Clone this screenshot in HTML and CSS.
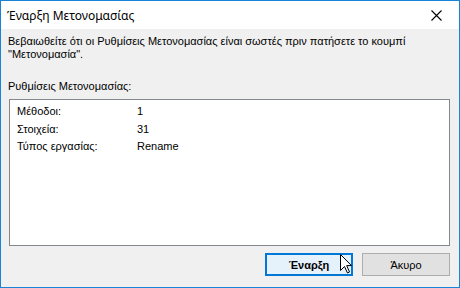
FILE: index.html
```html
<!DOCTYPE html>
<html lang="el">
<head>
<meta charset="utf-8">
<link rel="stylesheet" href="styles.css">
</head>
<body>
<div class="window">
  <div class="titlebar">
    <span class="title">Έναρξη Μετονομασίας</span>
    <span class="close">
      <svg width="11" height="11" viewBox="0 0 11 11"><path d="M0.5 0.5 L10.5 10.5 M10.5 0.5 L0.5 10.5" stroke="#000" stroke-width="1.1" fill="none"/></svg>
    </span>
  </div>
  <div class="content">
    <p class="intro">Βεβαιωθείτε ότι οι Ρυθμίσεις Μετονομασίας είναι σωστές πριν πατήσετε το κουμπί "Μετονομασία".</p>
    <p class="label">Ρυθμίσεις Μετονομασίας:</p>
    <div class="listbox">
      <div class="row"><span class="key">Μέθοδοι:</span><span class="val">1</span></div>
      <div class="row"><span class="key">Στοιχεία:</span><span class="val">31</span></div>
      <div class="row"><span class="key">Τύπος εργασίας:</span><span class="val">Rename</span></div>
    </div>
    <div class="buttons">
      <button class="btn btn-default">Έναρξη</button>
      <button class="btn">Άκυρο</button>
      <svg class="cursor" width="13" height="20" viewBox="0 0 13 20"><path d="M0.5 0.5 L0.5 16.5 L4.5 12.5 L7.5 19 L9.5 18 L6.7 11.6 L11.5 11.6 Z" fill="#fff" stroke="#000" stroke-width="1" stroke-linejoin="miter"/></svg>
    </div>
  </div>
</div>
</body>
</html>
```
FILE: styles.css
```css
html, body {
  margin: 0;
  padding: 0;
}
body {
  width: 460px;
  height: 288px;
  font-family: "Liberation Sans", Arial, sans-serif;
  font-size: 11px;
  color: #000;
}
.window {
  box-sizing: border-box;
  width: 460px;
  height: 288px;
  border: 1px solid #1883d7;
  display: flex;
  flex-direction: column;
  background: #f0f0f0;
}
.titlebar {
  height: 28px;
  background: #fff;
  display: flex;
  align-items: center;
  justify-content: space-between;
  flex: none;
}
.title {
  font-family: "Noto Sans", "Liberation Sans", sans-serif;
  font-size: 12px;
  padding-left: 6px;
}
.close {
  width: 46px;
  height: 28px;
  display: flex;
  align-items: center;
  justify-content: center;
}
.content {
  flex: 1;
  display: flex;
  flex-direction: column;
  padding: 6px 9px 12px 6px;
}
.intro {
  margin: 0;
  line-height: 13px;
  padding-left: 1px;
  width: 420px;
}
.label {
  margin: 19px 0 0 0;
  line-height: 13px;
  padding-left: 1px;
}
.listbox {
  margin-top: 6px;
  margin-left: 2px;
  height: 147px;
  box-sizing: border-box;
  border: 1px solid #828790;
  background: #fff;
  padding: 3px 0 0 7px;
}
.row {
  display: flex;
  height: 17.5px;
  line-height: 17px;
}
.key {
  width: 120px;
}
.buttons {
  margin-top: 7px;
  display: flex;
  justify-content: flex-end;
  gap: 9px;
  position: relative;
}
.btn {
  box-sizing: border-box;
  width: 88px;
  height: 23px;
  border: 1px solid #adadad;
  background: #e1e1e1;
  font-family: "Liberation Sans", Arial, sans-serif;
  font-size: 11px;
  color: #000;
  padding: 0;
  margin: 0;
}
.btn-default {
  border: 2px solid #0078d7;
  background: #e5f1fb;
  font-weight: bold;
}
.cursor {
  position: absolute;
  left: 333px;
  top: 1px;
}
```
